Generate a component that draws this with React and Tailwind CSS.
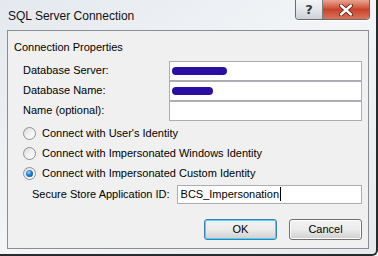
import React from 'react';

const Radio = ({ checked }) => (
  <span className="relative w-[13px] h-[13px] rounded-full border border-[#8f8f8f] bg-gradient-to-br from-[#d9d9d9] via-[#f2f2f2] to-[#ffffff] flex items-center justify-center shrink-0">
    {checked && (
      <span className="w-[7px] h-[7px] rounded-full bg-[radial-gradient(circle_at_40%_35%,#8fd4ff_0%,#1d7fd0_45%,#0a3f7e_100%)]" />
    )}
  </span>
);

const Blot = ({ w }) => (
  <span
    className="block h-[8px] rounded-full bg-[#2b0fa3] blur-[0.5px]"
    style={{ width: w }}
  />
);

export default function App() {
  return (
    <div
      className="w-[378px] h-[256px] relative overflow-hidden bg-gradient-to-br from-[#e4e9ef] via-[#f3f5f7] to-[#e6eaee] border-r-2 border-b-2 border-[#2a2a2a] rounded-br-[6px] text-[11px] text-black"
      style={{ fontFamily: '"Liberation Sans", Arial, sans-serif' }}
    >
      {/* title bar */}
      <div className="h-[30px] flex items-center pl-[8px] pt-[2px] text-[12px] text-[#101010]">
        SQL Server Connection
      </div>

      {/* caption buttons */}
      <div className="absolute top-0 right-[6px] flex h-[20px] rounded-b-[4px] overflow-hidden border border-t-0 border-[#6b6b6b] shadow-[0_1px_0_#ffffff]">
        <div className="w-[27px] bg-gradient-to-b from-[#f2f4f6] via-[#e4e7ea] to-[#cdd1d6] border-r border-[#7d7d7d] flex items-center justify-center text-[13px] font-bold text-[#3a3a3a]" style={{ fontFamily: '"DejaVu Sans", sans-serif' }}>
          ?
        </div>
        <div className="w-[46px] bg-gradient-to-b from-[#e8a493] via-[#c8432a] to-[#d9735d] flex items-center justify-center">
          <svg width="14" height="12" viewBox="0 0 14 12">
            <path d="M2 1.5L12 10.5M12 1.5L2 10.5" stroke="#5a1a10" strokeWidth="4" strokeLinecap="round" />
            <path d="M2 1.5L12 10.5M12 1.5L2 10.5" stroke="#ffffff" strokeWidth="2.4" strokeLinecap="round" />
          </svg>
        </div>
      </div>

      {/* content panel */}
      <div className="mx-[7px] h-[219px] border border-[#8a8d93] bg-[#f0f0f0] pt-[9px] pl-[6px] pr-[6px]">
        <div className="leading-[15px]">Connection Properties</div>

        <div className="mt-[6px] pl-[9px] flex flex-col">
          {[
            ['Database Server:', <Blot key="a" w={55} />],
            ['Database Name:', <Blot key="b" w={41} />],
            ['Name (optional):', null],
          ].map(([label, val], i) => (
            <div key={i} className="flex items-start h-[20px]">
              <span className="w-[146px] pt-[2px] leading-[14px] whitespace-nowrap">{label}</span>
              <div className="w-[194px] h-[20px] border border-[#abadb3] bg-white flex items-center pl-[2px]">
                {val}
              </div>
            </div>
          ))}
        </div>

        <div className="mt-[2px] pl-[9px] flex flex-col">
          {[
            ["Connect with User's Identity", false],
            ['Connect with Impersonated Windows Identity', false],
            ['Connect with Impersonated Custom Identity', true],
          ].map(([t, c], i) => (
            <div key={i} className="flex items-center h-[20px] gap-[6px]">
              <Radio checked={c} />
              <span className="leading-[14px] whitespace-nowrap">{t}</span>
            </div>
          ))}
        </div>

        <div className="mt-[1px] pl-[18px] flex items-center h-[20px]">
          <span className="w-[145px] whitespace-nowrap">Secure Store Application ID:</span>
          <div className="w-[186px] h-[19px] border border-[#abadb3] bg-white flex items-center pl-[3px]">
            <span>BCS_Impersonation</span>
            <span className="w-px h-[14px] bg-black ml-px" />
          </div>
        </div>

        <div className="mt-[15px] flex justify-end gap-[12px]">
          <button className="w-[73px] h-[21px] rounded-[3px] border border-[#3c7fb1] shadow-[inset_0_0_0_1px_#48d4ff] bg-gradient-to-b from-[#f2f2f2] via-[#ebebeb] to-[#cfcfcf]">
            OK
          </button>
          <button className="w-[73px] h-[21px] rounded-[3px] border border-[#707070] shadow-[inset_0_0_0_1px_#fcfcfc] bg-gradient-to-b from-[#f2f2f2] via-[#ebebeb] to-[#cfcfcf]">
            Cancel
          </button>
        </div>
      </div>
    </div>
  );
}
